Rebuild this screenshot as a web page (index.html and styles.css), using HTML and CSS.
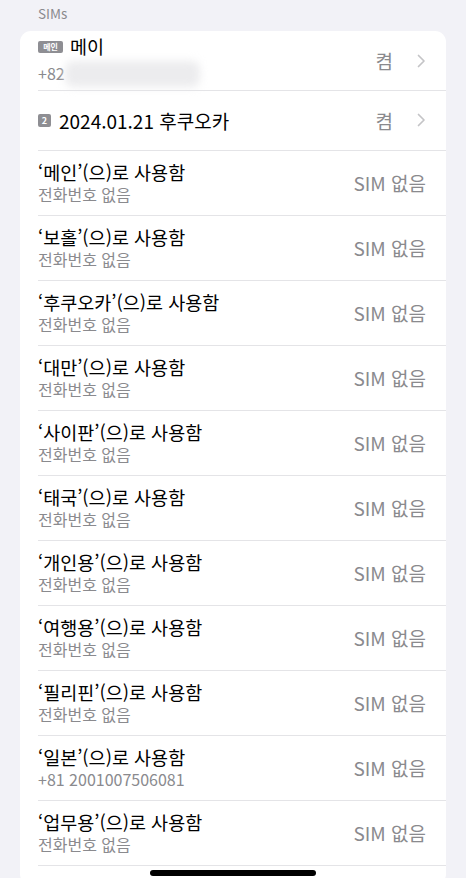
FILE: index.html
```html
<!DOCTYPE html>
<html lang="ko">
<head>
    <meta charset="UTF-8">
    <meta name="viewport" content="width=device-width, initial-scale=1.0">
    <title>SIMs</title>
    <link rel="stylesheet" href="styles.css">
</head>
<body>
    <div class="screen">
        <p class="section-title">SIMs</p>

        <ul class="group">
            <li class="row row-sim">
                <div class="text">
                    <div class="title"><span class="badge badge-wide">메인</span>메이</div>
                    <div class="sub">+82<span class="blurred"></span></div>
                </div>
                <span class="value">켬</span>
                <span class="chevron">
                    <svg width="9" height="14" viewBox="0 0 9 14"><path d="M1.5 1.5 L7 7 L1.5 12.5" fill="none" stroke="#c4c4c7" stroke-width="1.7" stroke-linecap="round" stroke-linejoin="round"/></svg>
                </span>
            </li>
            <li class="row row-sim">
                <div class="text">
                    <div class="title title-lg"><span class="badge">2</span>2024.01.21 후쿠오카</div>
                </div>
                <span class="value">켬</span>
                <span class="chevron">
                    <svg width="9" height="14" viewBox="0 0 9 14"><path d="M1.5 1.5 L7 7 L1.5 12.5" fill="none" stroke="#c4c4c7" stroke-width="1.7" stroke-linecap="round" stroke-linejoin="round"/></svg>
                </span>
            </li>
            <li class="row">
                <div class="text">
                    <div class="title">‘메인’(으)로 사용함</div>
                    <div class="sub">전화번호 없음</div>
                </div>
                <span class="value">SIM 없음</span>
            </li>
            <li class="row">
                <div class="text">
                    <div class="title">‘보홀’(으)로 사용함</div>
                    <div class="sub">전화번호 없음</div>
                </div>
                <span class="value">SIM 없음</span>
            </li>
            <li class="row">
                <div class="text">
                    <div class="title">‘후쿠오카’(으)로 사용함</div>
                    <div class="sub">전화번호 없음</div>
                </div>
                <span class="value">SIM 없음</span>
            </li>
            <li class="row">
                <div class="text">
                    <div class="title">‘대만’(으)로 사용함</div>
                    <div class="sub">전화번호 없음</div>
                </div>
                <span class="value">SIM 없음</span>
            </li>
            <li class="row">
                <div class="text">
                    <div class="title">‘사이판’(으)로 사용함</div>
                    <div class="sub">전화번호 없음</div>
                </div>
                <span class="value">SIM 없음</span>
            </li>
            <li class="row">
                <div class="text">
                    <div class="title">‘태국’(으)로 사용함</div>
                    <div class="sub">전화번호 없음</div>
                </div>
                <span class="value">SIM 없음</span>
            </li>
            <li class="row">
                <div class="text">
                    <div class="title">‘개인용’(으)로 사용함</div>
                    <div class="sub">전화번호 없음</div>
                </div>
                <span class="value">SIM 없음</span>
            </li>
            <li class="row">
                <div class="text">
                    <div class="title">‘여행용’(으)로 사용함</div>
                    <div class="sub">전화번호 없음</div>
                </div>
                <span class="value">SIM 없음</span>
            </li>
            <li class="row">
                <div class="text">
                    <div class="title">‘필리핀’(으)로 사용함</div>
                    <div class="sub">전화번호 없음</div>
                </div>
                <span class="value">SIM 없음</span>
            </li>
            <li class="row">
                <div class="text">
                    <div class="title">‘일본’(으)로 사용함</div>
                    <div class="sub">+81 2001007506081</div>
                </div>
                <span class="value">SIM 없음</span>
            </li>
            <li class="row">
                <div class="text">
                    <div class="title">‘업무용’(으)로 사용함</div>
                    <div class="sub">전화번호 없음</div>
                </div>
                <span class="value">SIM 없음</span>
            </li>
            <li class="row row-empty"></li>
        </ul>

        <div class="home-indicator"></div>
    </div>
</body>
</html>
```

FILE: styles.css
```css
html, body {
    margin: 0;
    padding: 0;
}

body {
    font-family: "Noto Sans CJK KR", "Noto Sans", sans-serif;
    background-color: #f2f2f7;
    color: #000;
}

.screen {
    width: 466px;
    height: 878px;
    overflow: hidden;
    position: relative;
}

.section-title {
    margin: 0;
    padding: 3px 0 0 38px;
    height: 31px;
    box-sizing: border-box;
    font-size: 13.5px;
    line-height: 20px;
    color: #8a8a8e;
}

.group {
    list-style: none;
    margin: 0 20px;
    padding: 0;
    background-color: #fff;
    border-radius: 11px;
}

.row {
    display: flex;
    align-items: center;
    height: 65px;
    padding: 0 20px 0 18px;
    position: relative;
}

.row + .row::before {
    content: "";
    position: absolute;
    top: 0;
    left: 18px;
    right: 0;
    height: 1px;
    background-color: #e4e4e7;
}

.row-sim {
    height: 60px;
}

.row-sim:first-child {
    height: 59px;
}

.row-empty {
    height: 20px;
}

.text {
    flex: 1;
    display: flex;
    flex-direction: column;
    min-width: 0;
}

.title {
    font-size: 18.5px;
    line-height: 23px;
    display: flex;
    align-items: center;
    white-space: nowrap;
}

.title-lg {
    font-size: 19px;
}

.sub {
    font-size: 16px;
    line-height: 21px;
    color: #8a8a8e;
    white-space: nowrap;
    display: flex;
    align-items: center;
}

.row-sim:first-child .sub {
    margin-top: 3px;
}

.blurred {
    display: inline-block;
    width: 135px;
    height: 26px;
    background-color: #ececee;
    border-radius: 8px;
    filter: blur(4px);
}

.badge {
    display: inline-flex;
    align-items: center;
    justify-content: center;
    min-width: 13px;
    height: 13px;
    padding: 0 1px;
    box-sizing: border-box;
    margin-right: 8px;
    border-radius: 2px;
    background-color: #8e8e93;
    color: #fff;
    font-size: 9px;
    font-weight: 700;
    line-height: 1;
}

.badge-wide {
    width: 25px;
    height: 12px;
    font-size: 8px;
    margin-right: 7px;
    margin-top: 2px;
}

.value {
    font-size: 19px;
    color: #8a8a8e;
    white-space: nowrap;
}

.chevron {
    display: flex;
    align-items: center;
    margin-left: 24px;
}

.home-indicator {
    position: absolute;
    left: 150px;
    bottom: 2px;
    width: 166px;
    height: 6px;
    border-radius: 3px;
    background-color: #000;
}
```
